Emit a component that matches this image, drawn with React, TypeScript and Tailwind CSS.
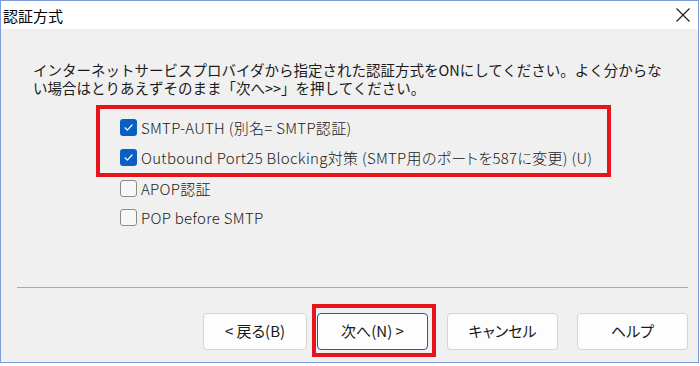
import React from 'react'

const JP = "font-['Noto_Sans_CJK_JP','Noto_Sans',sans-serif]"

// Windows 11 style checkbox
function CheckRow({ label, checked, className = '' }: { label: string; checked?: boolean; className?: string }) {
    return (
        <div className={`flex items-center gap-[4px] ${className}`}>
            {checked ? (
                <div className="w-[17px] h-[17px] rounded-[3px] bg-[#0a5fc4] flex items-center justify-center shrink-0">
                    <svg width="11" height="11" viewBox="0 0 11 11" fill="none">
                        <path d="M2 5.8 L4.4 8.1 L9 3" stroke="#ffffff" strokeWidth="1.2" strokeLinecap="round" strokeLinejoin="round" />
                    </svg>
                </div>
            ) : (
                <div className="w-[17px] h-[17px] rounded-[3px] bg-[#f7f7f7] border border-[#8b8b8b] shrink-0"></div>
            )}
            <span className="text-[15px] leading-none font-light tracking-[0.3px] text-[#1a1a1a] whitespace-nowrap [font-feature-settings:'palt']">
                {label}
            </span>
        </div>
    )
}

function WizButton({ label, primary, className = '' }: { label: string; primary?: boolean; className?: string }) {
    return (
        <button
            className={`h-[37px] rounded-[4px] bg-[#fdfdfd] text-[15px] text-[#1a1a1a] flex items-center justify-center [font-feature-settings:'palt'] ${
                primary ? 'border border-[#0a5fc4]' : 'border border-[#d4d4d4]'
            } ${className}`}
        >
            {label}
        </button>
    )
}

export default function App() {
    return (
        <div className={`w-[700px] h-[366px] bg-white ${JP}`}>
            <div className="w-[699px] h-[363px] border border-[#7d9cd8] bg-[#f0f0f0] flex flex-col">
                {/* Title bar */}
                <div className="h-[28px] bg-white flex items-center justify-between pl-[2px] pr-[8px] shrink-0">
                    <span className="text-[15px] leading-none text-black">認証方式</span>
                    <svg width="14" height="14" viewBox="0 0 14 14">
                        <path d="M0.5 0.5 L13.5 13.5 M13.5 0.5 L0.5 13.5" stroke="#1a1a1a" strokeWidth="1.1" />
                    </svg>
                </div>

                {/* Description */}
                <div className="mt-[32px] pl-[32px] text-[14.5px] leading-[18px] text-[#1a1a1a] whitespace-nowrap">
                    <div>インターネットサービスプロバイダから指定された認証方式をONにしてください。よく分からな</div>
                    <div>い場合はとりあえずそのまま「次へ&gt;&gt;」を押してください。</div>
                </div>

                {/* Options */}
                <div className="mt-[8px] ml-[95px] w-[515px] border-4 border-[#e8141c] pt-[3px] pb-[1px] pl-[20px]">
                    <CheckRow className="h-[30px]" checked label="SMTP-AUTH (別名= SMTP認証)" />
                    <CheckRow className="h-[30px]" checked label="Outbound Port25 Blocking対策 (SMTP用のポートを587に変更) (U)" />
                </div>
                <div className="ml-[119px] flex flex-col">
                    <CheckRow className="h-[22px]" label="APOP認証" />
                    <CheckRow className="h-[22px] mt-[7px]" label="POP before SMTP" />
                </div>

                {/* Separator */}
                <div className="mt-[59px] ml-[16px] w-[671px] h-[1px] bg-[#a9a9a9]"></div>

                {/* Buttons */}
                <div className="mt-[16px] flex items-start">
                    <WizButton className="ml-[202px] mt-[9px] w-[104px]" label="< 戻る(B)" />
                    <div className="ml-[5px] w-[124px] h-[53px] border-4 border-[#e8141c] pl-[1px] pt-[5px]">
                        <WizButton className="w-[111px]" primary label="次へ(N) >" />
                    </div>
                    <WizButton className="ml-[11px] mt-[9px] w-[111px]" label="キャンセル" />
                    <WizButton className="ml-[19px] mt-[9px] w-[111px]" label="ヘルプ" />
                </div>
            </div>
        </div>
    )
}
